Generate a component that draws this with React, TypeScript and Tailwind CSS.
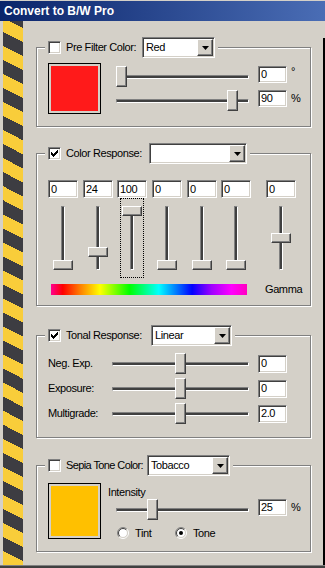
import React from "react";

const sunken =
  "bg-white border border-t-[#808080] border-l-[#808080] border-b-white border-r-white shadow-[inset_1px_1px_0_#404040,inset_-1px_-1px_0_#d4d0c8]";
const raised =
  "bg-[#d4d0c8] border border-t-white border-l-white border-b-[#404040] border-r-[#404040] shadow-[inset_-1px_-1px_0_#808080]";

function Check({ checked }: { checked: boolean }) {
  return (
    <div className={`w-[13px] h-[13px] shrink-0 flex items-center justify-center ${sunken}`}>
      {checked && (
        <svg width="7" height="7" viewBox="0 0 7 7" className="block">
          <path
            d="M6 0h1v1h-1z M5 1h2v1h-2z M0 2h1v1h-1z M4 2h3v1h-3z M0 3h2v1h-2z M3 3h3v1h-3z M0 4h5v1h-5z M1 5h3v1h-3z M2 6h1v1h-1z"
            fill="#000"
          />
        </svg>
      )}
    </div>
  );
}

function Select({ value, w }: { value: string; w: string }) {
  return (
    <div className={`${w} h-[21px] shrink-0 flex items-stretch p-[1px] ${sunken}`}>
      <div className="flex-1 flex items-center pl-[2px] leading-none">{value}</div>
      <div className={`w-[16px] flex items-center justify-center ${raised}`}>
        <svg width="7" height="4" viewBox="0 0 7 4" className="block">
          <path d="M0 0h7l-3.5 4z" fill="#000" />
        </svg>
      </div>
    </div>
  );
}

function ValueBox({ value, cls }: { value: string; cls: string }) {
  return (
    <div className={`${cls} shrink-0 flex items-center pl-[2px] leading-none ${sunken}`}>{value}</div>
  );
}

function HSlider({ w, pos }: { w: string; pos: number }) {
  return (
    <div className={`relative h-[21px] shrink-0 ${w}`}>
      <div className="absolute left-0 right-0 top-[9px] h-[4px] border border-t-[#808080] border-l-[#808080] border-b-white border-r-white bg-[#404040]" />
      <div className={`absolute top-0 w-[11px] h-[21px] ${raised}`} style={{ left: pos }} />
    </div>
  );
}

function VSlider({ top, focus }: { top: number; focus?: boolean }) {
  return (
    <div className="relative w-[24px] h-[80px]">
      {focus && <div className="absolute inset-0 border border-dotted border-black" />}
      <div className="absolute left-[10px] top-[8px] w-[4px] h-[64px] border border-t-[#808080] border-l-[#808080] border-b-white border-r-white bg-[#404040]" />
      <div className={`absolute left-[2px] w-[20px] h-[10px] ${raised}`} style={{ top }} />
    </div>
  );
}

function Radio({ checked }: { checked: boolean }) {
  return (
    <svg width="12" height="12" viewBox="0 0 12 12" className="block shrink-0">
      <circle cx="6" cy="6" r="4.5" fill="#fff" />
      <path d="M2.111 9.889 A5.5 5.5 0 0 1 9.889 2.111" stroke="#808080" fill="none" />
      <path d="M9.889 2.111 A5.5 5.5 0 0 1 2.111 9.889" stroke="#fff" fill="none" />
      <path d="M2.818 9.182 A4.5 4.5 0 0 1 9.182 2.818" stroke="#404040" fill="none" />
      <path d="M9.182 2.818 A4.5 4.5 0 0 1 2.818 9.182" stroke="#d4d0c8" fill="none" />
      {checked && <circle cx="6" cy="6" r="2" fill="#000" />}
    </svg>
  );
}

function Group({
  h,
  mt,
  checked,
  label,
  labelW,
  select,
  selectW,
  children,
}: {
  h: string;
  mt: string;
  checked: boolean;
  label: string;
  labelW: string;
  select: string;
  selectW: string;
  children: React.ReactNode;
}) {
  return (
    <div
      className={`relative w-[275px] ${h} ${mt} shrink-0 border border-[#808080] shadow-[1px_1px_0_#fff,inset_1px_1px_0_#fff]`}
    >
      <div className="absolute left-[8px] top-[-11px] h-[21px] px-[3px] bg-[#d4d0c8] flex items-center">
        <Check checked={checked} />
        <span className={`ml-[5px] ${labelW} shrink-0 whitespace-nowrap overflow-visible`}>{label}</span>
        <Select value={select} w={selectW} />
      </div>
      {children}
    </div>
  );
}

export default function App() {
  const cols = [
    { v: "0", top: 62, ml: "" },
    { v: "24", top: 49, ml: "ml-[5px]" },
    { v: "100", top: 8, ml: "ml-[4px]", focus: true },
    { v: "0", top: 62, ml: "ml-[5px]" },
    { v: "0", top: 62, ml: "ml-[5px]" },
    { v: "0", top: 62, ml: "ml-[4px]" },
  ];
  return (
    <div className="w-[325px] h-[568px] bg-[#d4d0c8] flex flex-col overflow-hidden text-[11px] tracking-[-0.4px] text-black font-['Liberation_Sans',Arial,sans-serif]">
      <div className="h-[1px] shrink-0" />
      <div className="h-[20px] shrink-0 bg-[linear-gradient(to_right,#0a246a,#4a6db5)] flex items-center pl-[4px] text-white font-bold text-[12px] tracking-[0px]">
        Convert to B/W Pro
      </div>
      <div className="flex flex-1 min-h-0">
        <div className="w-[3px] shrink-0" />
        <div className="w-[20px] shrink-0 bg-[repeating-linear-gradient(27deg,#f9cd3a_0px,#f9cd3a_12.5px,#3d3d42_12.5px,#3d3d42_25px)]" />
        <div className="ml-[13px] flex flex-col w-[276px]">
          {/* Pre filter */}
          <Group h="h-[80px]" mt="mt-[26px]" checked={false} label="Pre Filter Color:" labelW="w-[76px]" select="Red" selectW="w-[73px]">
            <div className="pt-[15px] pl-[11px] flex items-start">
              <div className="w-[53px] h-[51px] border border-black p-[2px]">
                <div className="w-full h-full bg-[#ff1a1a]" />
              </div>
              <div className="ml-[15px] mt-[3px] flex flex-col gap-[3px]">
                <div className="flex items-start">
                  <HSlider w="w-[133px]" pos={0} />
                  <ValueBox value="0" cls="ml-[9px] w-[29px] h-[17px]" />
                  <span className="ml-[4px] leading-none">°</span>
                </div>
                <div className="flex items-start">
                  <HSlider w="w-[133px]" pos={111} />
                  <ValueBox value="90" cls="ml-[9px] w-[29px] h-[17px]" />
                  <span className="ml-[4px] h-[17px] flex items-center">%</span>
                </div>
              </div>
            </div>
          </Group>

          {/* Color response */}
          <Group h="h-[153px]" mt="mt-[26px]" checked={true} label="Color Response:" labelW="w-[83px]" select="" selectW="w-[98px]">
            <div className="pt-[26px] pl-[11px] flex flex-col">
              <div className="flex items-start">
                {cols.map((c, i) => (
                  <div key={i} className={`w-[30px] flex flex-col items-center ${c.ml}`}>
                    <ValueBox value={c.v} cls="w-[30px] h-[18px]" />
                    <VSlider top={c.top} focus={c.focus} />
                  </div>
                ))}
                <div className="w-[30px] flex flex-col items-center ml-[15px]">
                  <ValueBox value="0" cls="w-[30px] h-[18px]" />
                  <VSlider top={35} />
                </div>
              </div>
              <div className="mt-[3px] flex items-center">
                <div className="ml-[3px] w-[196px] h-[11px] bg-[linear-gradient(to_right,#ff0090,#ff0000_6%,#ff8000_15%,#ffff00_25%,#00ff00_40%,#00ffff_55%,#0000ff_72%,#a000ff_82%,#ff00ff_92%,#ff00c0)]" />
                <span className="ml-[18px]">Gamma</span>
              </div>
            </div>
          </Group>

          {/* Tonal response */}
          <Group h="h-[103px]" mt="mt-[29px]" checked={true} label="Tonal Response:" labelW="w-[85px]" select="Linear" selectW="w-[81px]">
            <div className="pt-[17px] pl-[11px] flex flex-col gap-[4px]">
              {[
                ["Neg. Exp.", "0"],
                ["Exposure:", "0"],
                ["Multigrade:", "2.0"],
              ].map(([l, v]) => (
                <div key={l} className="flex items-center h-[21px]">
                  <span className="w-[64px]">{l}</span>
                  <HSlider w="w-[137px]" pos={63} />
                  <ValueBox value={v} cls="ml-[9px] w-[29px] h-[18px]" />
                </div>
              ))}
            </div>
          </Group>

          {/* Sepia */}
          <Group h="h-[87px]" mt="mt-[27px]" checked={false} label="Sepia Tone Color:" labelW="w-[81px] tracking-[-0.6px]" select="Tobacco" selectW="w-[83px]">
            <div className="pt-[17px] pl-[11px] flex items-start">
              <div className="w-[53px] h-[56px] border border-black p-[2px]">
                <div className="w-full h-full bg-[#ffc000]" />
              </div>
              <div className="ml-[7px] mt-[2px] flex flex-col">
                <div className="h-[14px] leading-[14px]">Intensity</div>
                <div className="ml-[8px] flex items-start">
                  <HSlider w="w-[133px]" pos={31} />
                  <ValueBox value="25" cls="ml-[9px] w-[29px] h-[17px]" />
                  <span className="ml-[4px] h-[17px] flex items-center">%</span>
                </div>
                <div className="ml-[9px] mt-[7px] flex items-center h-[12px]">
                  <div className="w-[58px] flex items-center">
                    <Radio checked={false} />
                    <span className="ml-[6px]">Tint</span>
                  </div>
                  <Radio checked={true} />
                  <span className="ml-[6px]">Tone</span>
                </div>
              </div>
            </div>
          </Group>
        </div>
        <div className="flex-1" />
        <div className="w-[2px] shrink-0 bg-black mt-[17px]" />
      </div>
      <div className="h-[3px] shrink-0 border-t border-[#808080] bg-[#404040]" />
    </div>
  );
}
